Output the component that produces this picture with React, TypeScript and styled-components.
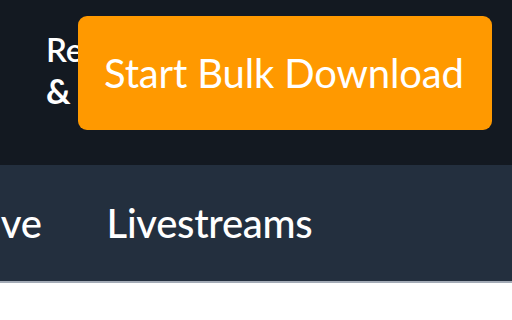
import React from "react";
import styled, { createGlobalStyle } from "styled-components";

const Global = createGlobalStyle`
  html, body { margin: 0; padding: 0; background: #ffffff; }
  body { font-family: Lato, "Noto Sans", sans-serif; overflow: hidden; }
  * { box-sizing: border-box; }
`;

const Page = styled.div`
  width: 512px;
  height: 320px;
  overflow: hidden;
  background: #ffffff;
`;

const TopBar = styled.header`
  height: 165px;
  background: #131921;
  display: flex;
  align-items: flex-start;
  padding-left: 46px;
`;

const Account = styled.a`
  display: flex;
  flex-direction: column;
  width: 32px;
  margin-top: 28px;
  overflow: hidden;
  white-space: nowrap;
  color: #ffffff;
  text-decoration: none;
  font-family: Lato, sans-serif;
`;

const AccountLine = styled.span<{ $bold?: boolean }>`
  font-size: ${(p) => (p.$bold ? "34px" : "33px")};
  font-weight: ${(p) => (p.$bold ? 700 : 600)};
  line-height: 42px;
`;

const BulkButton = styled.button`
  margin-top: 16px;
  height: 114px;
  width: 414px;
  padding: 0 0 0 26px;
  text-align: left;
  border: none;
  border-radius: 9px;
  background: #ff9900;
  color: #ffffff;
  font-family: Lato, sans-serif;
  font-size: 40px;
  font-weight: 400;
  letter-spacing: -0.15px;
  white-space: nowrap;
  cursor: pointer;
  flex-shrink: 0;
`;

const NavBar = styled.nav`
  height: 118px;
  background: #232f3e;
  border-bottom: 2px solid #a3abb6;
  display: flex;
  align-items: center;
  overflow: hidden;
`;

const NavList = styled.div`
  display: flex;
  align-items: center;
  gap: 65px;
  margin-left: -90px;
`;

const NavItem = styled.a`
  color: #ffffff;
  text-decoration: none;
  font-family: Lato, sans-serif;
  font-size: 40px;
  font-weight: 500;
  letter-spacing: -0.3px;
  white-space: nowrap;
`;

export default function App() {
  return (
    <Page>
      <Global />
      <TopBar>
        <Account href="#">
          <AccountLine>Returns</AccountLine>
          <AccountLine $bold>&amp; Orders</AccountLine>
        </Account>
        <BulkButton>Start Bulk Download</BulkButton>
      </TopBar>
      <NavBar>
        <NavList>
          <NavItem href="#">Archive</NavItem>
          <NavItem href="#">Livestreams</NavItem>
        </NavList>
      </NavBar>
    </Page>
  );
}
